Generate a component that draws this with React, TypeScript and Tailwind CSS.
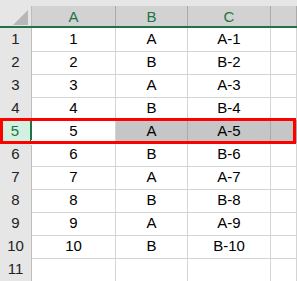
import React from "react";

const rows = Array.from({ length: 10 }, (_, i) => {
  const n = i + 1;
  const b = n % 2 === 1 ? "A" : "B";
  return { n, a: String(n), b, c: `${b}-${n}` };
});

const cols = "grid grid-cols-[32px_84px_72px_83px_26px]";

export default function App() {
  return (
    <div
      className="relative w-[297px] h-[281px] overflow-hidden bg-white text-[15px] text-black"
      style={{ fontFamily: '"Liberation Sans", Arial, sans-serif' }}
    >
      <div className="h-[6px] bg-[#e6e6e6]" />
      {/* column headers */}
      <div className={`${cols} h-[22px] bg-[#d2d2d2] border-b-2 border-[#217346]`}>
        <div className="relative border-r border-[#bdbdbd] bg-[#e6e6e6]">
          <svg className="absolute left-[13px] top-[4px]" width="15" height="15" viewBox="0 0 15 15">
            <polygon points="15,0 15,15 0,15" fill="#b7b7b7" />
          </svg>
        </div>
        {["A", "B", "C", ""].map((h, i) => (
          <div
            key={i}
            className="flex items-center justify-center border-r border-[#ababab] text-[#217346] leading-none pt-[1px]"
          >
            {h}
          </div>
        ))}
      </div>
      {rows.map((r) => {
        const sel = r.n === 5;
        return (
          <div key={r.n} className={`${cols} h-[23px]`}>
            <div
              className={
                sel
                  ? "flex items-center justify-center bg-[#d3f0e0] text-[#217346] border-r-2 border-[#217346] border-b border-b-[#bdbdbd]"
                  : "flex items-center justify-center bg-[#e6e6e6] text-[#222] border-r border-b border-[#bdbdbd]"
              }
            >
              {r.n}
            </div>
            <div className="flex items-center justify-center border-r border-b border-[#d4d4d4]">
              {r.a}
            </div>
            <div
              className={`flex items-center justify-center border-r border-b ${
                sel ? "bg-[#c6c6c6] border-[#ababab]" : "border-[#d4d4d4]"
              }`}
            >
              {r.b}
            </div>
            <div
              className={`flex items-center justify-center border-r border-b ${
                sel ? "bg-[#c6c6c6] border-[#ababab]" : "border-[#d4d4d4]"
              }`}
            >
              {r.c}
            </div>
            <div
              className={`border-r border-b ${
                sel ? "bg-[#c6c6c6] border-[#ababab]" : "border-[#d4d4d4]"
              }`}
            />
          </div>
        );
      })}
      <div className={`${cols} h-[23px]`}>
        <div className="flex items-center justify-center bg-[#e6e6e6] text-[#222] border-r border-b border-[#bdbdbd]">
          11
        </div>
        <div className="border-r border-b border-[#d4d4d4]" />
        <div className="border-r border-b border-[#d4d4d4]" />
        <div className="border-r border-b border-[#d4d4d4]" />
        <div className="border-r border-b border-[#d4d4d4]" />
      </div>
      {/* fill handle */}
      <div className="absolute left-[31px] top-[140px] w-[5px] h-[5px] bg-[#217346] border border-white" />
      {/* red highlight */}
      <div className="absolute left-0 top-[118px] w-[296px] h-[26px] border-[3px] border-[#ff0000]" />
    </div>
  );
}
